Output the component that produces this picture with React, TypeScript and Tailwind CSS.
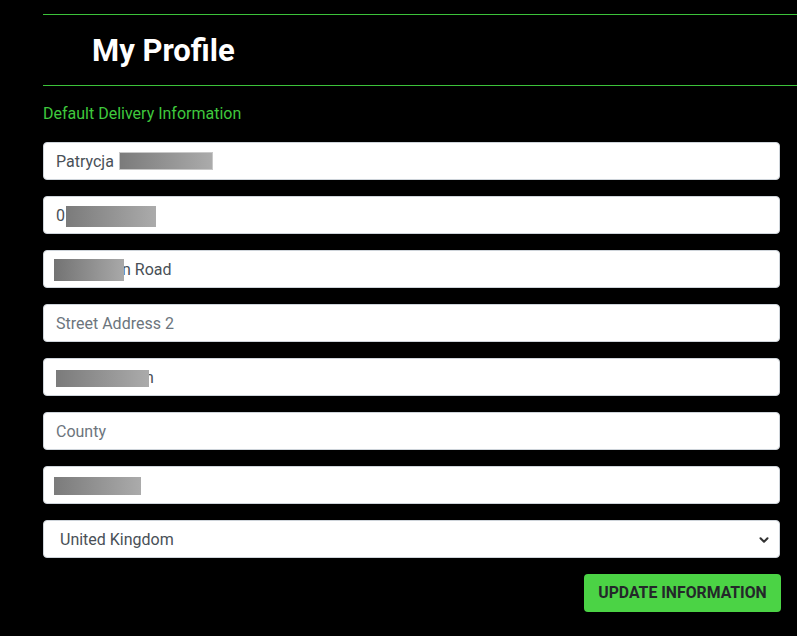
import { ChevronDown } from 'lucide-react';

const font = { fontFamily: 'Roboto, "Liberation Sans", sans-serif' };

const Redacted = ({ className }: { className: string }) => (
  <span
    className={`absolute bg-gradient-to-r from-[#7b7b7b] to-[#ababab] ${className}`}
  />
);

const Field = ({
  value,
  placeholder,
  children,
}: {
  value?: React.ReactNode;
  placeholder?: string;
  children?: React.ReactNode;
}) => (
  <div className="relative h-[38px] rounded-[4px] border border-[#ced4da] bg-white px-3 pt-px flex items-center text-base">
    {value ? (
      <span className="text-[#495057] whitespace-pre">{value}</span>
    ) : (
      <span className="text-[#6c757d]">{placeholder}</span>
    )}
    {children}
  </div>
);

export default function App() {
  return (
    <div className="min-h-screen bg-black pt-[14px] pl-[43px]" style={font}>
      {/* header */}
      <div className="border-y border-[#3cc23a] h-[72px] flex items-center pl-[49px]">
        <h2 className="text-[31px] font-bold text-white leading-none">My Profile</h2>
      </div>

      <div className="w-[737px]">
        <p className="text-[#3fc93d] text-base mt-4 mb-4 leading-6">
          Default Delivery Information
        </p>

        <div className="flex flex-col gap-4">
          <Field value="Patrycja ">
            <Redacted className="left-[75px] top-[9px] w-[94px] h-[18px] border border-[#c8c8c8]" />
          </Field>
          <Field value="0">
            <Redacted className="left-[22px] top-[9px] w-[90px] h-[21px]" />
          </Field>
          <Field value={<><span className="inline-block w-[66px]" />n Road</>}>
            <Redacted className="left-[10px] top-[8px] w-[70px] h-[22px] !from-[#737373] !to-[#a9a9a9]" />
          </Field>
          <Field placeholder="Street Address 2" />
          <Field value={<><span className="inline-block w-[89px]" />n</>}>
            <Redacted className="left-[12px] top-[11px] w-[93px] h-[17px]" />
          </Field>
          <Field placeholder="County" />
          <Field value=" ">
            <Redacted className="left-[10px] top-[10px] w-[87px] h-[18px]" />
          </Field>
          <div className="relative h-[38px] rounded-[4px] border border-[#ced4da] bg-white pl-4 pr-2 pt-px flex items-center justify-between text-base text-[#495057]">
            <span>United Kingdom</span>
            <ChevronDown size={14} strokeWidth={3.5} className="text-[#333]" />
          </div>
        </div>

        <div className="flex justify-end mt-4 mr-[-1px]">
          <button className="h-[38px] w-[197px] rounded-[4px] bg-[#4bd345] text-[#24272a] font-bold text-[15.8px] uppercase">
            Update Information
          </button>
        </div>
      </div>
    </div>
  );
}
